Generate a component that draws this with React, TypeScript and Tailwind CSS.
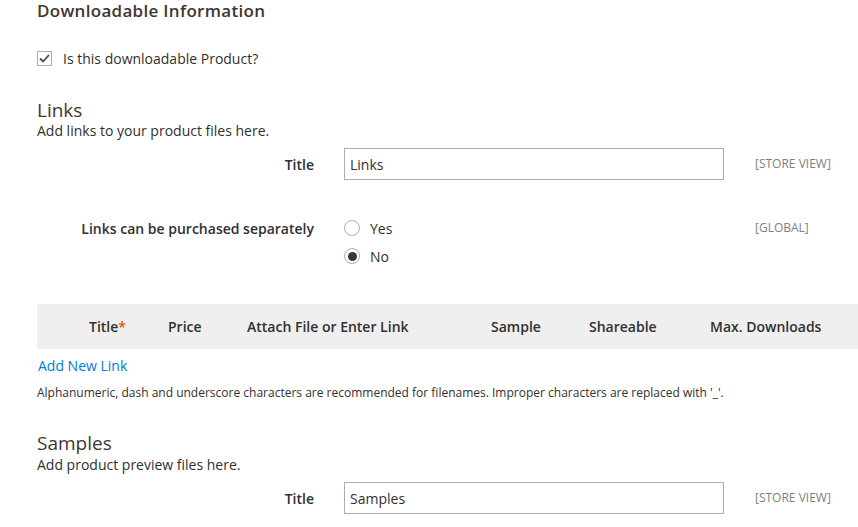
import { useState } from "react";

function FieldRow({
  label,
  scope,
  children,
}: {
  label: string;
  scope: string;
  children: React.ReactNode;
}) {
  return (
    <div className="flex items-start">
      <div className="flex h-[32px] w-[277px] items-center justify-end text-[14px] font-semibold text-[#303030]">
        {label}
      </div>
      <div className="ml-[30px] w-[380px]">{children}</div>
      <div className="ml-[31px] flex h-[32px] items-center text-[12px] text-[#808080]">{scope}</div>
    </div>
  );
}

function Radio({ checked, label }: { checked: boolean; label: string }) {
  return (
    <label className="flex h-[20px] items-center gap-[10px] text-[14px] text-[#303030]">
      <span className="flex h-[16px] w-[16px] items-center justify-center rounded-full border border-[#adadad] bg-white">
        {checked && <span className="h-[9px] w-[9px] rounded-full bg-[#41362f]" />}
      </span>
      {label}
    </label>
  );
}

export default function App() {
  const [linksTitle, setLinksTitle] = useState("Links");
  const [samplesTitle, setSamplesTitle] = useState("Samples");

  return (
    <div
      className="min-h-[527px] w-[858px] overflow-hidden bg-white pl-[37px] text-[#303030]"
      style={{ fontFamily: '"Open Sans", "Liberation Sans", sans-serif' }}
    >
      <h2 className="text-[17px] font-semibold leading-[22px] tracking-[0.3px] text-[#41362f]">
        Downloadable Information
      </h2>

      <label className="mt-[28px] flex h-[16px] items-center gap-[11px] text-[14px]">
        <span className="flex h-[15px] w-[15px] items-center justify-center border border-[#adadad] bg-white">
          <svg width="11" height="9" viewBox="0 0 11 9" fill="none">
            <path d="M1 4.5 L4 7.5 L10 1" stroke="#514943" strokeWidth="1.8" />
          </svg>
        </span>
        Is this downloadable Product?
      </label>

      <h3 className="mt-[32px] text-[19px] font-medium leading-[24px] text-[#41362f]">Links</h3>
      <p className="text-[14px] leading-[18px]">Add links to your product files here.</p>

      <div className="mt-[8px]">
        <FieldRow label="Title" scope="[STORE VIEW]">
          <input
            value={linksTitle}
            onChange={(e) => setLinksTitle(e.target.value)}
            className="h-[32px] w-[380px] border border-[#adadad] px-[5px] text-[14px] text-[#303030] outline-none"
          />
        </FieldRow>
      </div>

      <div className="mt-[38px] flex items-start">
        <div className="flex h-[20px] w-[277px] items-center justify-end text-[14px] font-semibold">
          Links can be purchased separately
        </div>
        <div className="ml-[30px] flex w-[380px] flex-col gap-[8px]">
          <Radio checked={false} label="Yes" />
          <Radio checked label="No" />
        </div>
        <div className="ml-[31px] flex h-[20px] items-center text-[12px] text-[#808080]">[GLOBAL]</div>
      </div>

      <div className="mt-[38px] flex h-[45px] items-center bg-[#efefef] pl-[52px] text-[14px] font-semibold text-[#303030]">
        <div className="w-[79px]">
          Title<span className="text-[#eb5202]">*</span>
        </div>
        <div className="w-[79px]">Price</div>
        <div className="w-[244px]">Attach File or Enter Link</div>
        <div className="w-[98px]">Sample</div>
        <div className="w-[121px]">Shareable</div>
        <div>Max. Downloads</div>
      </div>

      <button type="button" className="mt-[6px] block h-[20px] pl-[1px] text-[14px] font-medium text-[#007bdb]">
        Add New Link
      </button>

      <p className="mt-[10px] text-[12px] leading-[16px]">
        Alphanumeric, dash and underscore characters are recommended for filenames. Improper characters are
        replaced with '_'.
      </p>

      <h3 className="mt-[30px] text-[19px] font-medium leading-[24px] text-[#41362f]">Samples</h3>
      <p className="mt-[1px] text-[14px] leading-[18px]">Add product preview files here.</p>

      <div className="mt-[8px]">
        <FieldRow label="Title" scope="[STORE VIEW]">
          <input
            value={samplesTitle}
            onChange={(e) => setSamplesTitle(e.target.value)}
            className="h-[32px] w-[380px] border border-[#adadad] px-[5px] text-[14px] text-[#303030] outline-none"
          />
        </FieldRow>
      </div>
    </div>
  );
}
